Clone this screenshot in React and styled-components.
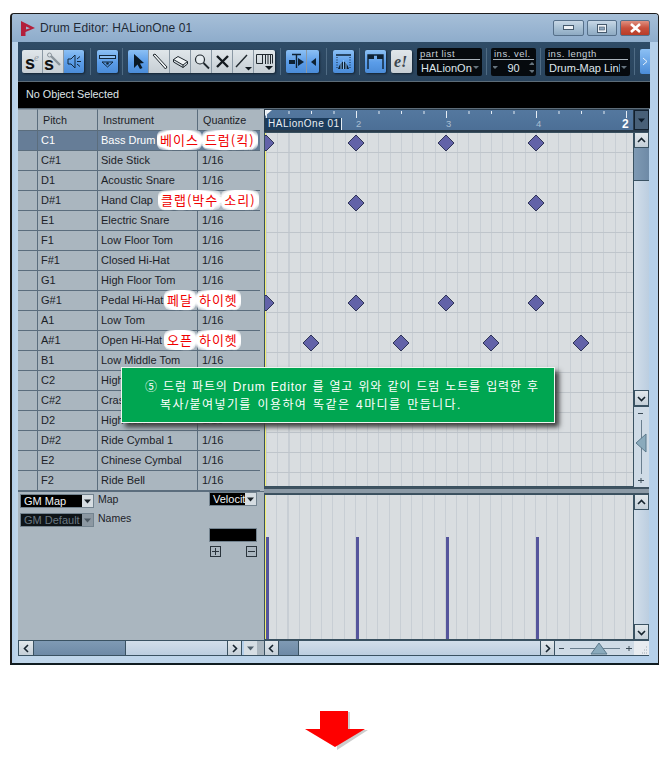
import React from "react";
import styled, { createGlobalStyle, css } from "styled-components";

const GlobalStyle = createGlobalStyle`
  html, body {
    margin: 0;
    padding: 0;
    background: #fff;
    font-family: "Liberation Sans", Arial, sans-serif;
  }
`;

const Page = styled.div`
  width: 670px;
  height: 777px;
  overflow: hidden;
  padding: 13px 0 0 10px;
  box-sizing: border-box;
`;

const Window = styled.div`
  position: relative;
  width: 649px;
  height: 652px;
  box-sizing: border-box;
  border: 1px solid #1c1c1c;
  border-bottom: 2px solid #101c20;
  border-left-width: 2px;
  border-radius: 4px 4px 0 0;
  background: linear-gradient(90deg, #b5d0ea 0, #c0d6ea 6px, #b5d0ea 100%);
  display: flex;
  flex-direction: column;
`;

const TitleBar = styled.div`
  height: 28px;
  flex: none;
  display: flex;
  align-items: center;
  padding: 0 8px 0 9px;
  background: linear-gradient(180deg, #a6bfd8 0, #8eaccb 100%);
  border-radius: 3px 3px 0 0;
`;

const TitleText = styled.span`
  margin-left: 4px;
  font-size: 12px;
  letter-spacing: 0.12px;
  color: #1e2a36;
`;

const WinButtons = styled.div`
  margin-left: auto;
  display: flex;
  gap: 3px;
`;

const WinButton = styled.div`
  width: ${(p) => p.$w}px;
  height: 16px;
  border: 1px solid #56708a;
  border-radius: 2px;
  box-sizing: border-box;
  display: flex;
  align-items: center;
  justify-content: center;
  background: ${(p) =>
    p.$close
      ? "linear-gradient(180deg, #e09080 0, #c8503c 50%, #b83c28 100%)"
      : "linear-gradient(180deg, #c8d8e6 0, #a8c0d4 50%, #8eaac2 100%)"};
`;

const Body = styled.div`
  flex: 1;
  display: flex;
  flex-direction: column;
  margin: 0 8px 0 6px;
  min-height: 0;
`;

const Toolbar = styled.div`
  height: 39px;
  flex: none;
  display: flex;
  align-items: center;
  padding: 0 0 0 4px;
  box-sizing: border-box;
  background: linear-gradient(180deg, #2f4c67 0, #29435c 100%);
`;

const Group = styled.div`
  display: flex;
  height: 23px;
  margin-left: ${(p) => p.$ml || 0}px;
  border-radius: 2px;
  overflow: hidden;
  flex: none;
  box-shadow: 1px 1px 2px #142434;
`;

const Tool = styled.div`
  width: ${(p) => p.$w || 21}px;
  height: 23px;
  flex: none;
  display: flex;
  align-items: center;
  justify-content: center;
  box-sizing: border-box;
  border-right: 1px solid #8a98a4;
  background: ${(p) =>
    p.$on
      ? "linear-gradient(180deg, #8cc0f4 0, #5a9ce8 55%, #4b8cd8 100%)"
      : "linear-gradient(180deg, #e0e6ea 0, #c6ced4 100%)"};
  &:last-child {
    border-right: 0;
  }
`;

const Sep = styled.div`
  width: 1px;
  height: 27px;
  margin: 0 ${(p) => p.$r || 6}px 0 ${(p) => p.$l || 6}px;
  background: #4f6b84;
  flex: none;
`;

const Field = styled.div`
  width: ${(p) => p.$w}px;
  height: 28px;
  flex: none;
  margin-left: ${(p) => p.$ml || 0}px;
  background: #060a0e;
  border-radius: 2px;
  box-sizing: border-box;
  padding: 0 2px;
  color: #dfe6ec;
  display: flex;
  flex-direction: column;
`;

const FieldLabel = styled.div`
  height: 11px;
  line-height: 11px;
  font-size: 9.5px;
  letter-spacing: 0.5px;
  padding-left: 1px;
  border-bottom: 1px solid #aab4bc;
  color: #c6d0d8;
`;

const FieldValue = styled.div`
  flex: 1;
  display: flex;
  align-items: center;
  justify-content: ${(p) => (p.$center ? "center" : "flex-start")};
  gap: ${(p) => (p.$center ? 8 : 0)}px;
  font-size: 11px;
  padding-left: ${(p) => (p.$center ? 0 : 2)}px;
  white-space: nowrap;
  overflow: hidden;
`;

const Clip = styled.span`
  flex: 1;
  overflow: hidden;
`;

const CaretDown = styled.span`
  flex: none;
  width: 0;
  height: 0;
  border-left: 3px solid transparent;
  border-right: 3px solid transparent;
  border-top: 3px solid #66747e;
  margin: 0 1px;
`;

const Stepper = styled.span`
  display: flex;
  flex-direction: column;
  gap: 5px;
`;

const CaretUp = styled.span`
  width: 0;
  height: 0;
  margin: 0 1px;
  border-left: 3px solid transparent;
  border-right: 3px solid transparent;
  border-bottom: 3px solid #66747e;
`;

const MoreButton = styled.div`
  margin-left: auto;
  width: 10px;
  height: 25px;
  border-radius: 2px 0 0 2px;
  background: linear-gradient(180deg, #8cc0f4 0, #4b8cd8 100%);
  display: flex;
  align-items: center;
  justify-content: center;
`;

const InfoBar = styled.div`
  height: 26px;
  flex: none;
  background: #000;
  color: #dfe4e8;
  font-size: 10.8px;
  line-height: 24px;
  padding-left: 8px;
  border-top: 1px solid #5d6c78;
  border-bottom: 1px solid #5d6c78;
`;

const Editor = styled.div`
  flex: 1;
  display: flex;
  min-height: 0;
  margin-bottom: 7px;
`;

const LeftPane = styled.div`
  width: 246px;
  flex: none;
  display: flex;
  flex-direction: column;
  background: #aab6bf;
`;

const Row = styled.div`
  display: grid;
  grid-template-columns: 20px 60px 100px 62px;
  width: 242px;
  height: ${(p) => p.$h || 20}px;
  flex: none;
  box-sizing: border-box;
  border-bottom: 1px solid #5b6d7d;
  font-size: 11px;
  line-height: 19px;
  color: ${(p) => (p.$selected ? "#fff" : "#1c2228")};
  background: ${(p) => (p.$selected ? "#667d97" : "#aab6bf")};
`;

const Cell = styled.div`
  box-sizing: border-box;
  border-right: 1px solid #5b6d7d;
  padding-left: 3px;
  white-space: nowrap;
  overflow: hidden;
  &:last-child {
    border-right: 0;
    padding-left: 4px;
  }
`;

const HeadCell = styled(Cell)`
  line-height: 21px;
  padding-left: 5px;
  border-top: 1px solid #8b99a5;
  font-size: 10.8px;
  &:last-child {
    padding-left: 5px;
  }
`;

const MapPanel = styled.div`
  flex: 1;
  display: flex;
  padding: 0 7px 0 2px;
  border-top: 1px solid #5b6d7d;
  min-height: 0;
`;

const MapColumn = styled.div`
  display: flex;
  flex-direction: column;
  gap: 5px;
  margin-top: 2px;
`;

const MapLine = styled.div`
  display: flex;
  gap: 4px;
  align-items: flex-start;
`;

const MapLabel = styled.span`
  font-size: 10.5px;
  line-height: 12px;
  margin-top: -1px;
  color: #1c2228;
`;

const Select = styled.div`
  width: ${(p) => p.$w}px;
  height: 14px;
  flex: none;
  display: flex;
  background: ${(p) => (p.$disabled ? "#0e1418" : "#000")};
  border: 1px solid #73838f;
  box-sizing: border-box;
  color: ${(p) => (p.$disabled ? "#6a7882" : "#eef2f4")};
  font-size: 11px;
  line-height: 13px;
  overflow: hidden;
`;

const SelectText = styled.span`
  flex: 1;
  padding-left: 3px;
  white-space: nowrap;
  overflow: hidden;
`;

const SelectArrow = styled.span`
  flex: none;
  width: 11px;
  background: ${(p) => (p.$disabled ? "#8c98a2" : "#d6dde2")};
  display: flex;
  align-items: center;
  justify-content: center;
`;

const ValueColumn = styled.div`
  margin-left: auto;
  width: 48px;
  display: flex;
  flex-direction: column;
`;

const ValueBox = styled.div`
  height: 14px;
  flex: none;
  box-sizing: border-box;
  margin-top: 22px;
  background: #000;
  border: 1px solid #73838f;
`;

const PlusMinus = styled.div`
  display: flex;
  justify-content: space-between;
  padding: 0 0 0 1px;
  margin-top: 4px;
`;

const SquareIcon = styled.div`
  width: 9px;
  height: 9px;
  border: 1px solid #2a343c;
  position: relative;
  &::before {
    content: "";
    position: absolute;
    left: 1px;
    right: 1px;
    top: 4px;
    height: 1px;
    background: #2a343c;
  }
  ${(p) =>
    p.$plus &&
    css`
      &::after {
        content: "";
        position: absolute;
        top: 1px;
        bottom: 1px;
        left: 4px;
        width: 1px;
        background: #2a343c;
      }
    `}
`;

const HScroll = styled.div`
  height: 16px;
  flex: none;
  display: flex;
  box-sizing: border-box;
  border-top: 1px solid #3a5262;
  border-bottom: 1px solid #3a5262;
  background: #b5d0ea;
`;

const ScrollButton = styled.div`
  width: ${(p) => p.$size || 15}px;
  height: ${(p) => (p.$vertical ? "16px" : "auto")};
  flex: none;
  display: flex;
  align-items: center;
  justify-content: center;
  box-sizing: border-box;
  background: linear-gradient(180deg, #e2e8ec 0, #c4cfd8 100%);
  border: 1px solid #3a5262;
  border-width: ${(p) => (p.$vertical ? "1px" : "0 1px")};
`;

const Thumb = styled.div`
  width: ${(p) => p.$w}px;
  flex: none;
  background: linear-gradient(180deg, #7f9ab4 0, #6e8aa6 100%);
  border-right: 1px solid #3a5262;
`;

const Track = styled.div`
  flex: 1;
  background: linear-gradient(180deg, #d2deea 0, #bccee0 100%);
`;

const CornerMenu = styled.div`
  width: 13px;
  flex: none;
  margin-left: 2px;
  background: #d6dee4;
  display: flex;
  align-items: center;
  justify-content: center;
`;

const PaneGap = styled.div`
  width: 7px;
  flex: none;
  background: #aab6bf;
`;

const RightPane = styled.div`
  width: 385px;
  flex: none;
  display: flex;
  flex-direction: column;
`;

const RulerRow = styled.div`
  height: 23px;
  flex: none;
  display: flex;
  background: #2a3c4c;
  padding: 1px 0 2px 1px;
  box-sizing: border-box;
`;

const Ruler = styled.div`
  position: relative;
  flex: 1;
  background: linear-gradient(180deg, #54789f 0, #4c6f96 100%);
  overflow: hidden;
`;

const PartTag = styled.div`
  position: absolute;
  left: 0;
  bottom: 0;
  width: 77px;
  height: 12px;
  background: #1c3c5c;
  border-right: 1px solid #e6eef4;
  color: #e8eef4;
  font-size: 10px;
  line-height: 12px;
  letter-spacing: 0.5px;
  padding-left: 3px;
  box-sizing: border-box;
  white-space: nowrap;
  overflow: hidden;
`;

const BarNumber = styled.span`
  position: absolute;
  left: ${(p) => p.$x}px;
  bottom: 0;
  font-size: ${(p) => (p.$end ? 12 : 9.5)}px;
  font-weight: ${(p) => (p.$end ? 700 : 400)};
  line-height: 12px;
  color: ${(p) => (p.$end ? "#fff" : "#a9bed2")};
`;

const RulerMenu = styled.div`
  width: 15px;
  flex: none;
  margin-left: 1px;
  background: #486078;
  border: 1px solid #12202e;
  box-sizing: border-box;
  display: flex;
  align-items: center;
  justify-content: center;
`;

const Lane = styled.div`
  flex: ${(p) => (p.$fixed ? `0 0 ${p.$fixed}px` : 1)};
  min-height: 0;
  display: flex;
`;

const Grid = styled.div`
  position: relative;
  flex: 1;
  overflow: hidden;
  box-sizing: border-box;
  border: 1px solid #39505f;
  border-width: 1px 0 1px 1px;
  background-color: #d9dde0;
  background-image:
    ${(p) =>
      p.$rows
        ? "repeating-linear-gradient(180deg, transparent 0 19px, #bfc5cb 19px 20px),"
        : ""}
    repeating-linear-gradient(90deg, #c8ced4 0 1px, transparent 1px 11.25px);
  background-position: 0 0, 1px 0;
  &::before {
    content: "";
    position: absolute;
    top: 0;
    bottom: 0;
    left: 0;
    width: 1px;
    background: #f2ee70;
  }
`;

const Note = styled.svg`
  position: absolute;
  left: ${(p) => p.$x - 9}px;
  top: ${(p) => p.$y - 9}px;
  width: 18px;
  height: 18px;
`;

const Hit = styled.div`
  position: absolute;
  left: ${(p) => p.$x}px;
  top: ${(p) => p.$top}px;
  bottom: 0;
  width: 3px;
  background: #55559c;
`;

const VScroll = styled.div`
  width: 16px;
  flex: none;
  display: flex;
  flex-direction: column;
  border-left: 1px solid #3a5262;
  box-sizing: border-box;
`;

const VThumb = styled.div`
  height: 32px;
  flex: none;
  background: linear-gradient(90deg, #7f9ab4 0, #6e8aa6 100%);
  border-bottom: 1px solid #3a5262;
`;

const VTrack = styled.div`
  flex: 1;
  background: linear-gradient(90deg, #d2deea 0, #bccee0 100%);
`;

const ZoomV = styled.div`
  height: 80px;
  flex: none;
  background: #cfdbe6;
  border-top: 1px solid #3a5262;
  display: flex;
  align-items: center;
  justify-content: center;
`;

const Splitter = styled.div`
  height: 7px;
  flex: none;
  background: #8c9aa6;
  border-top: 2px solid #3e5260;
  border-bottom: 1px solid #3e5260;
  box-sizing: border-box;
`;

const ZoomH = styled.div`
  width: 79px;
  flex: none;
  background: #cfdbe6;
  display: flex;
  align-items: center;
  justify-content: center;
`;

const Grip = styled.div`
  width: 15px;
  flex: none;
  background: #e8ecf0;
  display: flex;
  align-items: flex-end;
  justify-content: flex-end;
`;

const Label = styled.div`
  position: absolute;
  left: ${(p) => p.$x}px;
  top: ${(p) => p.$y}px;
  display: flex;
  white-space: nowrap;
`;

const LabelWord = styled.span`
  padding: 0 3px;
  height: 20px;
  line-height: 19px;
  font-family: "Noto Sans CJK KR", sans-serif;
  font-size: 13px;
  letter-spacing: 1px;
  color: #f00000;
  background: radial-gradient(ellipse at center, #fff 70%, rgba(255, 255, 255, 0) 100%);
  border-radius: 6px;
  text-shadow:
    2px 0 0 #fff, -2px 0 0 #fff, 0 2px 0 #fff, 0 -2px 0 #fff,
    2px 2px 0 #fff, -2px 2px 0 #fff, 2px -2px 0 #fff, -2px -2px 0 #fff,
    3px 1px 1px #fff, -3px 1px 1px #fff, 1px 3px 1px #fff, 1px -3px 1px #fff,
    -1px 3px 1px #fff, -1px -3px 1px #fff, 3px -1px 1px #fff, -3px -1px 1px #fff;
`;

const Callout = styled.div`
  position: absolute;
  left: 109px;
  top: 353px;
  width: 434px;
  height: 56px;
  box-sizing: border-box;
  background: #00a651;
  border: 1px solid #eef6f0;
  box-shadow: 4px 4px 5px #3c3c3c;
  color: #fff;
  font-family: "Liberation Sans", "Noto Sans CJK KR", sans-serif;
  font-size: 12px;
  line-height: 18px;
  padding: 10px 0 0 23px;
`;

const CalloutLine = styled.div`
  padding-left: ${(p) => p.$indent || 0}px;
  letter-spacing: ${(p) => p.$spacing}px;
  word-spacing: 1px;
  white-space: nowrap;
`;

const ArrowBox = styled.div`
  padding-left: 295px;
  margin-top: 46px;
`;

const rows = [
  ["C1", "Bass Drum", "1/16"],
  ["C#1", "Side Stick", "1/16"],
  ["D1", "Acoustic Snare", "1/16"],
  ["D#1", "Hand Clap", "1/16"],
  ["E1", "Electric Snare", "1/16"],
  ["F1", "Low Floor Tom", "1/16"],
  ["F#1", "Closed Hi-Hat", "1/16"],
  ["G1", "High Floor Tom", "1/16"],
  ["G#1", "Pedal Hi-Hat", "1/16"],
  ["A1", "Low Tom", "1/16"],
  ["A#1", "Open Hi-Hat", "1/16"],
  ["B1", "Low Middle Tom", "1/16"],
  ["C2", "High Middle Tom", "1/16"],
  ["C#2", "Crash Cymbal 1", "1/16"],
  ["D2", "High Tom", "1/16"],
  ["D#2", "Ride Cymbal 1", "1/16"],
  ["E2", "Chinese Cymbal", "1/16"],
  ["F2", "Ride Bell", "1/16"],
];

const notes = [
  [0, 10], [90, 10], [180, 10], [270, 10],
  [90, 70], [270, 70],
  [0, 170], [90, 170], [180, 170], [270, 170],
  [45, 210], [135, 210], [225, 210], [315, 210],
];

const hits = [0, 90, 180, 270];

const Chevron = ({ dir }) => {
  const d = {
    left: "M6 1 L2.5 4.5 L6 8",
    right: "M3 1 L6.5 4.5 L3 8",
    up: "M1 6 L4.5 2.5 L8 6",
    down: "M1 3 L4.5 6.5 L8 3",
  }[dir];
  return (
    <svg width="9" height="9" viewBox="0 0 9 9">
      <path d={d} fill="none" stroke="#16242e" strokeWidth="1.6" />
    </svg>
  );
};

const SmallArrow = ({ color = "#1a2228" }) => (
  <svg width="7" height="5" viewBox="0 0 7 5">
    <path d="M0 0.5 H7 L3.5 4.5 Z" fill={color} />
  </svg>
);

const Icon = ({ children, w = 17, h = 17 }) => (
  <svg width={w} height={h} viewBox={`0 0 ${w} ${h}`}>
    {children}
  </svg>
);

export default function App() {
  return (
    <Page>
      <GlobalStyle />
      <Window>
        <TitleBar>
          <svg width="15" height="15" viewBox="0 0 15 15">
            <path d="M0 0 L14 7 L4.5 11 V15 H0 Z" fill="#b3203c" />
            <path d="M5 5.5 L9 7.2 L5 8.6 Z" fill="#9db8d2" />
          </svg>
          <TitleText>Drum Editor: HALionOne 01</TitleText>
          <WinButtons>
            <WinButton $w={31}>
              <svg width="11" height="6" viewBox="0 0 11 6">
                <rect x="0.5" y="0.5" width="10" height="4" fill="#eef2f6" stroke="#45596c" />
              </svg>
            </WinButton>
            <WinButton $w={30}>
              <svg width="10" height="9" viewBox="0 0 10 9">
                <rect x="0.5" y="0.5" width="9" height="8" fill="#eef2f6" stroke="#45596c" />
                <rect x="2.5" y="3" width="5" height="3" fill="#8ea6bc" stroke="#45596c" strokeWidth="0.6" />
              </svg>
            </WinButton>
            <WinButton $w={30} $close>
              <svg width="13" height="10" viewBox="0 0 13 10">
                <path d="M2 1 L11 9 M11 1 L2 9" stroke="#fff" strokeWidth="2.6" />
              </svg>
            </WinButton>
          </WinButtons>
        </TitleBar>
        <Body>
          <Toolbar>
            <Group>
              <Tool>
                <Icon w={19} h={19}>
                  <text x="2" y="17" fontFamily="Liberation Sans" fontWeight="700" fontSize="18" fill="#111">s</text>
                  <text x="11" y="9" fontFamily="Liberation Serif" fontStyle="italic" fontSize="11" fill="#98a2aa">e</text>
                </Icon>
              </Tool>
              <Tool>
                <Icon w={19} h={19}>
                  <path d="M7 4 L16 13" stroke="#8a949c" strokeWidth="2.4" fill="none" />
                  <circle cx="5.5" cy="3" r="2" fill="none" stroke="#8a949c" />
                  <text x="0" y="18" fontFamily="Liberation Sans" fontWeight="700" fontSize="18" fill="#111">s</text>
                </Icon>
              </Tool>
              <Tool $on $w={20}>
                <Icon>
                  <path d="M2 6 H5 L9 2 V15 L5 11 H2 Z" fill="none" stroke="#12283c" />
                  <path d="M11 8.5 H15 M11 6 L14 3.5 M11 11 L14 13.5" stroke="#12283c" fill="none" />
                </Icon>
              </Tool>
            </Group>
            <Sep />
            <Group>
              <Tool $on>
                <Icon w={19}>
                  <rect x="1.5" y="2.5" width="16" height="3" fill="#8cc0f4" stroke="#12283c" />
                  <path d="M4 9 H15 L9.5 14 Z" fill="none" stroke="#12283c" />
                  <circle cx="9.5" cy="10.5" r="1.3" fill="#12283c" />
                </Icon>
              </Tool>
            </Group>
            <Sep $l={4} $r={5} />
            <Group>
              <Tool $on>
                <Icon>
                  <path d="M4 1 L4 15 L7.5 11.5 L10 16 L12.5 15 L10 10.5 L14 10 Z" fill="#0a1824" />
                </Icon>
              </Tool>
              <Tool>
                <Icon>
                  <path d="M2 2 L4 1 L16 14 L14.5 16 Z" fill="#eef2f4" stroke="#20282e" />
                </Icon>
              </Tool>
              <Tool>
                <Icon>
                  <path d="M1.5 6.5 L6 3.5 L15.5 8.5 L11 12 Z" fill="#eef2f4" stroke="#20282e" />
                  <path d="M1.5 6.5 V9 L11 14.5 L15.5 11 V8.5 M11 12 V14.5" fill="none" stroke="#20282e" />
                </Icon>
              </Tool>
              <Tool>
                <Icon>
                  <circle cx="7" cy="6.5" r="4.5" fill="#e6ecf0" stroke="#20282e" strokeWidth="1.2" />
                  <path d="M10.5 10 L16 15.5" stroke="#20282e" strokeWidth="1.8" />
                </Icon>
              </Tool>
              <Tool>
                <Icon>
                  <path d="M3 3 L14 14 M14 3 L3 14" stroke="#141a20" strokeWidth="2.4" />
                </Icon>
              </Tool>
              <Tool>
                <Icon w={19} h={19}>
                  <path d="M2 15 L13 3" stroke="#20282e" strokeWidth="1.4" />
                  <path d="M11 15 H18 L14.5 18.5 Z" fill="#10181e" />
                </Icon>
              </Tool>
              <Tool>
                <Icon w={19} h={19}>
                  <path d="M1.5 11.5 V2.5 H17.5 V11.5 M1.5 11.5 H7" fill="none" stroke="#20282e" />
                  <path d="M7.5 3 V12 M10.5 3 V12 M13 3 V12 M15.5 3 V12" stroke="#20282e" />
                  <path d="M10 14 H18 L14 18 Z" fill="#10181e" />
                </Icon>
              </Tool>
            </Group>
            <Sep $l={5} $r={5} />
            <Group>
              <Tool $on>
                <Icon w={19}>
                  <path d="M5 1.5 H14 M9.5 2 V15" stroke="#0e2234" strokeWidth="1.4" />
                  <rect x="2" y="7" width="6" height="4" fill="#0e2234" />
                  <path d="M11 5 L17 9 L11 13 Z" fill="#0e2234" />
                </Icon>
              </Tool>
              <Tool $on $w={12}>
                <svg width="5" height="8" viewBox="0 0 5 8">
                  <path d="M5 0 V8 L0 4 Z" fill="#0e2234" />
                </svg>
              </Tool>
            </Group>
            <Sep $l={7} />
            <Group>
              <Tool $on>
                <Icon w={19}>
                  <path d="M2 2 H17" stroke="#0e2234" strokeWidth="1.6" />
                  <path d="M3 4 V16 M16 4 V16" stroke="#0e2234" strokeDasharray="1 1.5" />
                  <path d="M4 16 Q9.5 1 15 16 Z" fill="#0e2234" />
                  <path d="M7 9 V16 M9.5 7 V16 M12 9 V16" stroke="#8cc0f4" />
                </Icon>
              </Tool>
            </Group>
            <Sep $l={5} $r={5} />
            <Group>
              <Tool $on>
                <Icon w={19}>
                  <path d="M2 16 V2 H17 V16" fill="none" stroke="#0e2234" strokeWidth="1.4" />
                  <rect x="2" y="2" width="6" height="4" fill="#0e2234" />
                  <rect x="11" y="2" width="6" height="4" fill="#0e2234" />
                </Icon>
              </Tool>
            </Group>
            <Group $ml={5}>
              <Tool>
                <svg width="19" height="17" viewBox="0 0 19 17">
                  <text x="2" y="14" fontFamily="Liberation Serif" fontStyle="italic" fontWeight="700" fontSize="16" fill="#3c464e">e!</text>
                </svg>
              </Tool>
            </Group>
            <Field $w={65} $ml={5}>
              <FieldLabel>part list</FieldLabel>
              <FieldValue>
                <Clip>HALionOne</Clip>
                <CaretDown />
              </FieldValue>
            </Field>
            <Sep $l={4} $r={4} />
            <Field $w={45}>
              <FieldLabel>ins. vel.</FieldLabel>
              <FieldValue $center>
                <CaretDown />
                90
                <Stepper>
                  <CaretUp />
                  <CaretDown />
                </Stepper>
              </FieldValue>
            </Field>
            <Sep $l={4} $r={4} />
            <Field $w={85}>
              <FieldLabel>ins. length</FieldLabel>
              <FieldValue>
                <Clip>Drum-Map Link</Clip>
                <CaretDown />
              </FieldValue>
            </Field>
            <Sep $l={4} $r={4} />
            <MoreButton>
              <svg width="6" height="9" viewBox="0 0 6 9">
                <path d="M1 1 L5 4.5 L1 8" fill="none" stroke="#e8f2fc" />
              </svg>
            </MoreButton>
          </Toolbar>
          <InfoBar>No Object Selected</InfoBar>
          <Editor>
            <LeftPane>
              <Row $h={22}>
                <HeadCell />
                <HeadCell>Pitch</HeadCell>
                <HeadCell>Instrument</HeadCell>
                <HeadCell>Quantize</HeadCell>
              </Row>
              {rows.map(([pitch, name, q], i) => (
                <Row key={pitch} $selected={i === 0}>
                  <Cell />
                  <Cell>{pitch}</Cell>
                  <Cell>{name}</Cell>
                  <Cell>{q}</Cell>
                </Row>
              ))}
              <MapPanel>
                <MapColumn>
                  <MapLine>
                    <Select $w={74}>
                      <SelectText>GM Map</SelectText>
                      <SelectArrow><SmallArrow /></SelectArrow>
                    </Select>
                    <MapLabel>Map</MapLabel>
                  </MapLine>
                  <MapLine>
                    <Select $w={74} $disabled>
                      <SelectText>GM Default</SelectText>
                      <SelectArrow $disabled><SmallArrow color="#4c5862" /></SelectArrow>
                    </Select>
                    <MapLabel>Names</MapLabel>
                  </MapLine>
                </MapColumn>
                <ValueColumn>
                  <Select $w={48}>
                    <SelectText>Velocity</SelectText>
                    <SelectArrow><SmallArrow /></SelectArrow>
                  </Select>
                  <ValueBox />
                  <PlusMinus>
                    <SquareIcon $plus />
                    <SquareIcon />
                  </PlusMinus>
                </ValueColumn>
              </MapPanel>
              <HScroll>
                <ScrollButton $size={16}><Chevron dir="left" /></ScrollButton>
                <Thumb $w={91} />
                <Track />
                <ScrollButton $size={15}><Chevron dir="right" /></ScrollButton>
                <CornerMenu><SmallArrow color="#50606c" /></CornerMenu>
                <PaneGap />
              </HScroll>
            </LeftPane>
            <RightPane>
              <RulerRow>
                <Ruler>
                  <svg width="368" height="20" viewBox="0 0 368 20">
                    <path d="M0 0 H7 L0 6 Z" fill="#f2f6fa" />
                    {Array.from({ length: 17 }, (_, i) => (
                      <path
                        key={i}
                        d={`M${1.5 + i * 22.5} 1 V${i % 4 === 0 ? 8 : 4}`}
                        stroke="#e4ecf4"
                      />
                    ))}
                  </svg>
                  <BarNumber $x={91}>2</BarNumber>
                  <BarNumber $x={181}>3</BarNumber>
                  <BarNumber $x={271}>4</BarNumber>
                  <BarNumber $x={357} $end>2</BarNumber>
                  <PartTag>HALionOne 01</PartTag>
                </Ruler>
                <RulerMenu>
                  <SmallArrow color="#0c1a28" />
                </RulerMenu>
              </RulerRow>
              <Lane>
                <Grid $rows>
                  {notes.map(([x, y]) => (
                    <Note key={`${x}-${y}`} $x={x + 1} $y={y} viewBox="0 0 18 18">
                      <path d="M9 1 L17 9 L9 17 L1 9 Z" fill="#6262a8" stroke="#2e3456" />
                    </Note>
                  ))}
                </Grid>
                <VScroll>
                  <ScrollButton $size={15} $vertical><Chevron dir="up" /></ScrollButton>
                  <VThumb />
                  <VTrack />
                  <ScrollButton $size={15} $vertical><Chevron dir="down" /></ScrollButton>
                  <ZoomV>
                    <svg width="15" height="78" viewBox="0 0 15 78">
                      <path d="M4 5.5 H9" stroke="#3a4a56" />
                      <path d="M7.5 12 V66" stroke="#6a7e8e" />
                      <path d="M12 26 V44 L2 35 Z" fill="#8aaabc" stroke="#5c7a8c" />
                      <path d="M4 72.5 H10 M7 70 V75" stroke="#3a4a56" />
                    </svg>
                  </ZoomV>
                </VScroll>
              </Lane>
              <Splitter />
              <Lane $fixed={146}>
                <Grid>
                  {hits.map((x) => (
                    <Hit key={x} $x={x + 1} $top={42} />
                  ))}
                </Grid>
                <VScroll>
                  <ScrollButton $size={15} $vertical><Chevron dir="up" /></ScrollButton>
                  <VTrack />
                  <ScrollButton $size={15} $vertical><Chevron dir="down" /></ScrollButton>
                </VScroll>
              </Lane>
              <HScroll>
                <ScrollButton $size={15}><Chevron dir="left" /></ScrollButton>
                <Thumb $w={19} />
                <Track />
                <ScrollButton $size={15}><Chevron dir="right" /></ScrollButton>
                <ZoomH>
                  <svg width="78" height="14" viewBox="0 0 78 14">
                    <path d="M3 7.5 H8" stroke="#3a4a56" />
                    <path d="M14 7.5 H64" stroke="#6a7e8e" />
                    <path d="M35 13 H51 L43 2 Z" fill="#8aaabc" stroke="#5c7a8c" />
                    <path d="M70 7.5 H76 M73 5 V10" stroke="#3a4a56" />
                  </svg>
                </ZoomH>
                <Grip>
                  <svg width="10" height="10" viewBox="0 0 10 10">
                    <path d="M7 2 h1 M5 5 h1 M7 5 h1 M3 8 h1 M5 8 h1 M7 8 h1" stroke="#a0aab2" />
                  </svg>
                </Grip>
              </HScroll>
            </RightPane>
          </Editor>
        </Body>
        <Label $x={145} $y={116}>
          <LabelWord>베이스</LabelWord>
          <LabelWord>드럼(킥)</LabelWord>
        </Label>
        <Label $x={146} $y={176}>
          <LabelWord>클랩(박수</LabelWord>
          <LabelWord>소리)</LabelWord>
        </Label>
        <Label $x={152} $y={276}>
          <LabelWord>페달</LabelWord>
          <LabelWord>하이헷</LabelWord>
        </Label>
        <Label $x={152} $y={316}>
          <LabelWord>오픈</LabelWord>
          <LabelWord>하이헷</LabelWord>
        </Label>
        <Callout>
          <CalloutLine $spacing={0.85}>⑤ 드럼 파트의 Drum Editor 를 열고 위와 같이 드럼 노트를 입력한 후</CalloutLine>
          <CalloutLine $indent={15} $spacing={1.4}>복사/붙여넣기를 이용하여 똑같은 4마디를 만듭니다.</CalloutLine>
        </Callout>
      </Window>
      <ArrowBox>
        <svg width="66" height="42" viewBox="0 0 66 42">
          <path d="M31 1 H45 V19 H63 L32 39 Z" fill="#b8b8b8" opacity="0.7" />
          <path d="M15 0 H43 V18 H60 L30 36 L0 18 H15 Z" fill="#fe0000" />
        </svg>
      </ArrowBox>
    </Page>
  );
}
